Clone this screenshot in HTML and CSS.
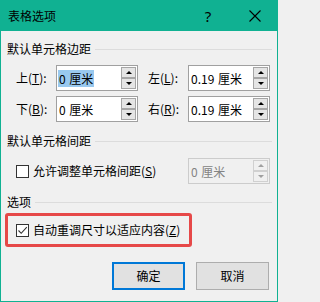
FILE: index.html
```html
<!DOCTYPE html>
<html lang="zh-CN">
<head>
<meta charset="utf-8">
<title>表格选项</title>
<link rel="stylesheet" href="styles.css">
</head>
<body>
<div class="window">
  <div class="titlebar">
    <span class="title">表格选项</span>
    <span class="help">?</span>
    <span class="close"><svg width="12" height="12" viewBox="0 0 12 12"><path d="M0.5 0.5 L11.5 11.5 M11.5 0.5 L0.5 11.5" stroke="#000" stroke-width="1.1" fill="none"/></svg></span>
  </div>
  <div class="content">
    <div class="group-head g1"><span>默认单元格边距</span><i class="rule"></i></div>
    <div class="margins">
      <label class="lbl">上(<u>T</u>):</label>
      <div class="spin">
        <div class="field"><span class="sel">0 厘米</span></div>
        <div class="btns"><b class="btn"><i class="up"></i></b><b class="btn"><i class="down"></i></b></div>
      </div>
      <label class="lbl">左(<u>L</u>):</label>
      <div class="spin">
        <div class="field"><span>0.19 厘米</span></div>
        <div class="btns"><b class="btn"><i class="up"></i></b><b class="btn"><i class="down"></i></b></div>
      </div>
      <label class="lbl">下(<u>B</u>):</label>
      <div class="spin">
        <div class="field"><span>0 厘米</span></div>
        <div class="btns"><b class="btn"><i class="up"></i></b><b class="btn"><i class="down"></i></b></div>
      </div>
      <label class="lbl">右(<u>R</u>):</label>
      <div class="spin">
        <div class="field"><span>0.19 厘米</span></div>
        <div class="btns"><b class="btn"><i class="up"></i></b><b class="btn"><i class="down"></i></b></div>
      </div>
    </div>
    <div class="group-head g2"><span>默认单元格间距</span><i class="rule"></i></div>
    <div class="spacing">
      <label class="check-row"><span class="box"></span><span>允许调整单元格间距(<u>S</u>)</span></label>
      <div class="spin disabled">
        <div class="field"><span>0 厘米</span></div>
        <div class="btns"><b class="btn"><i class="up"></i></b><b class="btn"><i class="down"></i></b></div>
      </div>
    </div>
    <div class="group-head g3"><span>选项</span><i class="rule"></i></div>
    <div class="highlight">
      <label class="check-row"><span class="box checked"><svg width="11" height="11" viewBox="0 0 11 11"><path d="M1.5 5.5 L4.2 8.3 L9.8 2.2" stroke="#333" stroke-width="1.1" fill="none"/></svg></span><span>自动重调尺寸以适应内容(<u>Z</u>)</span></label>
    </div>
    <div class="actions">
      <button class="button primary">确定</button>
      <button class="button">取消</button>
    </div>
  </div>
</div>
</body>
</html>
```

FILE: styles.css
```css
* { box-sizing: border-box; }
html, body { margin: 0; padding: 0; }
body {
  font-family: "Noto Sans CJK SC", "Noto Sans", sans-serif;
  font-size: 12px;
  line-height: 16px;
  color: #000;
  background: #f0f0f0;
}
.window {
  width: 278px;
  height: 302px;
  border: 1px solid #10b192;
  border-top: 0;
  background: #f0f0f0;
}
.titlebar {
  height: 31px;
  margin: 0 -1px;
  background: #10b192;
  display: flex;
  align-items: center;
}
.title {
  flex: 1;
  padding-left: 8px;
  font-size: 12px;
}
.help {
  width: 46px;
  text-align: center;
  font-family: "Noto Sans", sans-serif;
  font-size: 15px;
}
.close {
  width: 47px;
  height: 31px;
  display: flex;
  align-items: center;
  justify-content: center;
}
.close svg { display: block; }
.content {
  padding: 0 5px 0 5px;
}
.group-head {
  display: flex;
  align-items: center;
  height: 16px;
  padding-left: 1px;
}
.group-head .rule {
  flex: 1;
  height: 1px;
  background: #dcdcdc;
  margin-left: 4px;
}
.g1 { margin-top: 10px; }
.g2 { margin-top: 11px; }
.g3 { margin-top: 10px; }
.margins {
  margin-top: 8px;
  display: grid;
  grid-template-columns: 50px 82px 50px 82px;
  grid-auto-rows: 26px;
  row-gap: 5px;
}
.lbl {
  display: flex;
  align-items: center;
  padding-left: 10px;
}
.spin {
  display: flex;
  border: 1px solid #a0a0a0;
  background: #fff;
  height: 26px;
}
.field {
  flex: 1;
  display: flex;
  align-items: center;
  padding-left: 1px;
}
.field span { padding: 0 1px; line-height: 17px; word-spacing: 1px; }
.field .sel { background: #99c9ef; }
.btns {
  width: 16px;
  padding: 1px 1px 1px 0;
  display: flex;
  flex-direction: column;
}
.btn {
  flex: 1;
  border: 1px solid #a6a6a6;
  background: #e5e5e5;
  display: flex;
  align-items: center;
  justify-content: center;
}
.up, .down {
  width: 0; height: 0;
  border-left: 3px solid transparent;
  border-right: 3px solid transparent;
}
.up { border-bottom: 3px solid #000; }
.down { border-top: 3px solid #000; }
.spacing {
  margin-top: 9px;
  display: grid;
  grid-template-columns: 182px 82px;
  height: 26px;
}
.check-row {
  display: flex;
  align-items: center;
  padding-left: 10px;
}
.box {
  width: 13px;
  height: 13px;
  border: 1px solid #333;
  background: #fff;
  margin-right: 4px;
  display: flex;
  align-items: center;
  justify-content: center;
}
.box svg { display: block; }
.spin.disabled { border-color: #cccccc; background: #f0f0f0; }
.spin.disabled .field span { color: #838383; }
.spin.disabled .btn { border-color: #d0d0d0; background: #f0f0f0; }
.spin.disabled .up { border-bottom-color: #a0a0a0; }
.spin.disabled .down { border-top-color: #a0a0a0; }
.highlight {
  margin: 3px 0 0 -1px;
  width: 187px;
  height: 34px;
  border: 3px solid #e64848;
  border-radius: 3px;
  display: flex;
  align-items: center;
}
.highlight .check-row { padding-left: 8px; }
.actions {
  margin-top: 15px;
  display: flex;
  justify-content: flex-end;
  gap: 11px;
  padding-right: 3px;
}
.button {
  width: 73px;
  height: 28px;
  font: inherit;
  color: #000;
  background: #e1e1e1;
  border: 1px solid #adadad;
  padding: 0;
}
.button.primary { border: 2px solid #0078d7; }
```
